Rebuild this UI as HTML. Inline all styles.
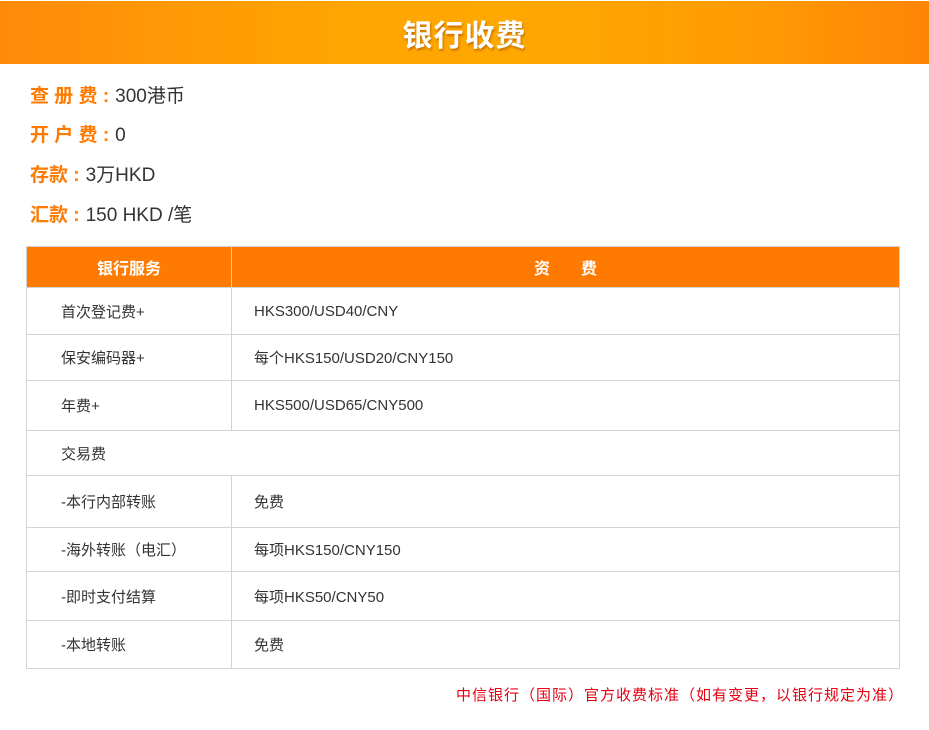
<!DOCTYPE html>
<html><head><meta charset="utf-8"><style>
body{margin:0;width:929px;height:730px;background:#fff;font-family:"Liberation Sans","Noto Sans CJK SC",sans-serif;position:relative;overflow:hidden}
.band{position:absolute;left:0;top:1px;width:929px;height:63px;background:linear-gradient(90deg,#ff8a08 0%,#ff9a06 20%,#ffa600 40%,#ffa800 55%,#ff9c04 80%,#ff8504 100%)}
.band h1{margin:0;text-align:center;color:#fff;font-size:30px;font-weight:bold;line-height:63px;padding-top:4px;text-shadow:1px 2px 2px rgba(150,60,0,.5);letter-spacing:1px}
.info{position:absolute;left:30px;font-size:19px;color:#333;line-height:24px}
.info b{color:#ff7a00;margin-right:6px}
table{position:absolute;left:26px;top:246px;width:874px;border-collapse:collapse;font-size:15px;color:#333}
td,th{border:1px solid #d3d3d3;padding:0}
th{background:#ff7a00;color:#fff;font-size:16px;height:40px}
td.a{width:170px;padding-left:34px}
td.b{padding-left:22px}
.note{position:absolute;right:25px;top:684px;color:#e60012;font-size:15px;letter-spacing:1px}
</style></head><body>
<div class="band"><h1>银行收费</h1></div>
<div class="info" style="top:85px"><b>查 册 费 :</b>300港币</div>
<div class="info" style="top:124px"><b>开 户 费 :</b>0</div>
<div class="info" style="top:164px"><b>存款 :</b>3万HKD</div>
<div class="info" style="top:204px"><b>汇款 :</b>150 HKD /笔</div>
<table>
<tr><th style="width:203px">银行服务</th><th>资&nbsp;&nbsp;&nbsp;&nbsp;&nbsp;&nbsp;&nbsp;费</th></tr>
<tr style="height:47px"><td class="a">首次登记费+</td><td class="b">HKS300/USD40/CNY</td></tr>
<tr style="height:46px"><td class="a">保安编码器+</td><td class="b">每个HKS150/USD20/CNY150</td></tr>
<tr style="height:50px"><td class="a">年费+</td><td class="b">HKS500/USD65/CNY500</td></tr>
<tr style="height:45px"><td class="a" colspan="2">交易费</td></tr>
<tr style="height:52px"><td class="a">-本行内部转账</td><td class="b">免费</td></tr>
<tr style="height:44px"><td class="a">-海外转账（电汇）</td><td class="b">每项HKS150/CNY150</td></tr>
<tr style="height:49px"><td class="a">-即时支付结算</td><td class="b">每项HKS50/CNY50</td></tr>
<tr style="height:48px"><td class="a">-本地转账</td><td class="b">免费</td></tr>
</table>
<div class="note">中信银行（国际）官方收费标准（如有变更，以银行规定为准）</div>
</body></html>
